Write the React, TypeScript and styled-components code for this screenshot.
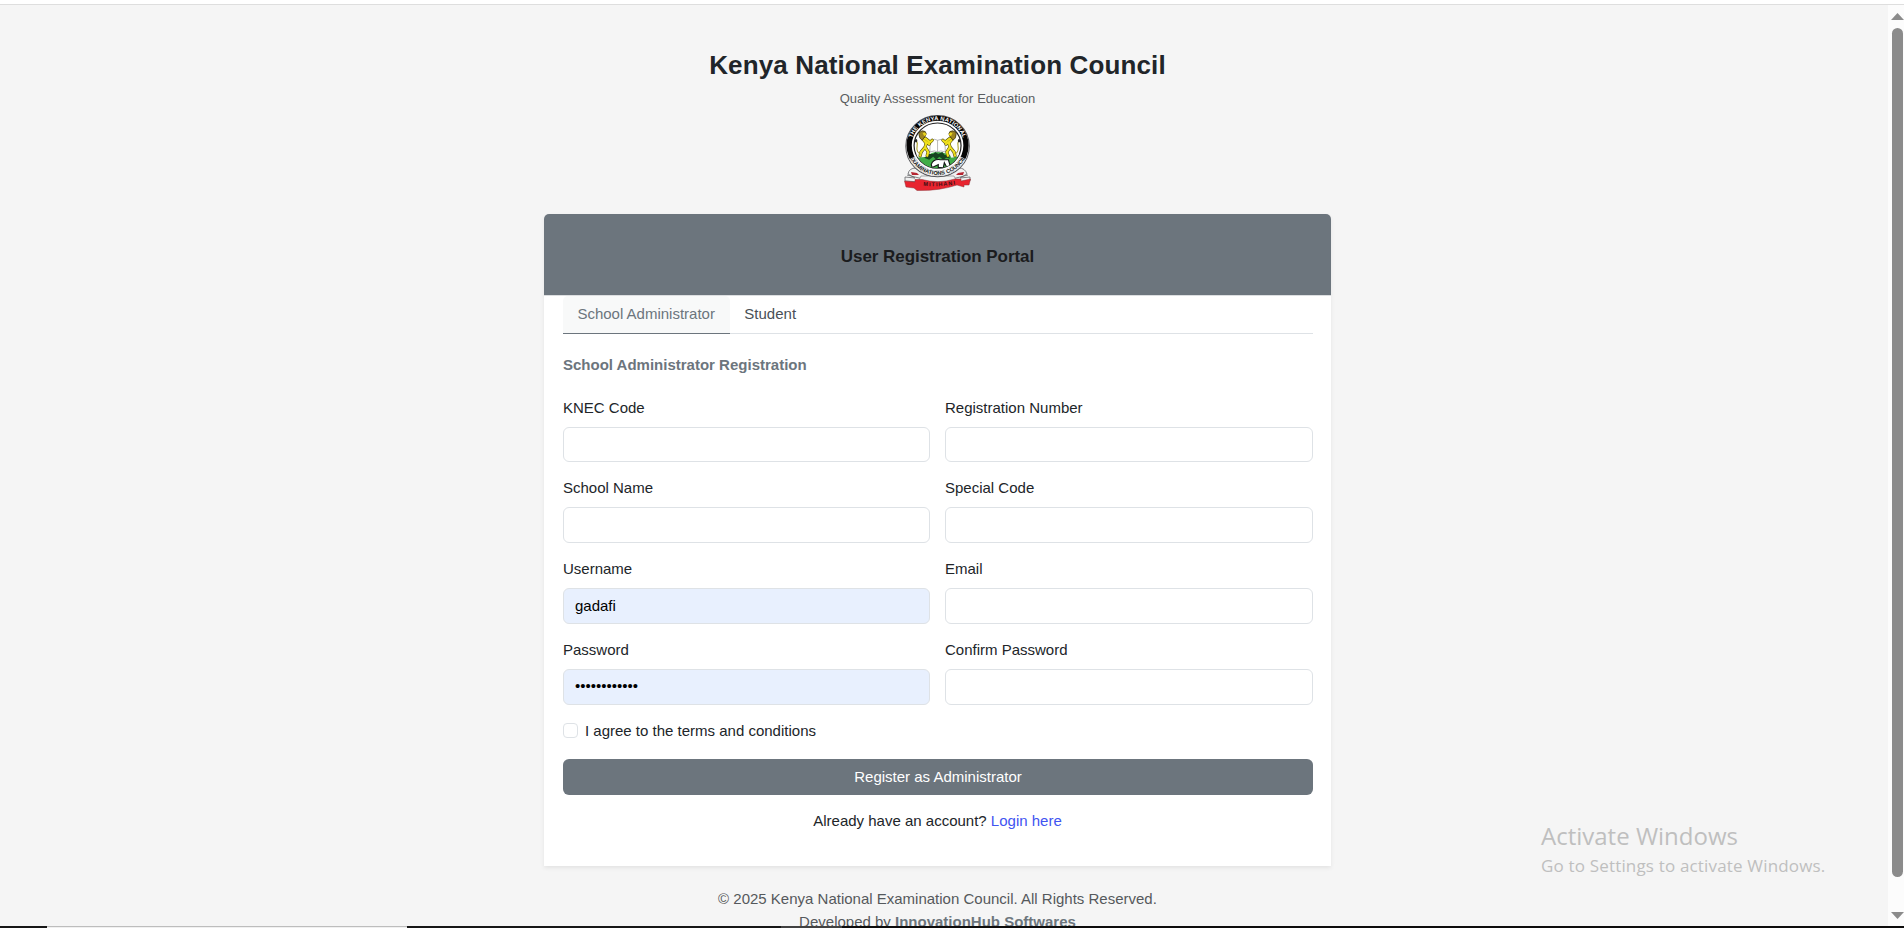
import React, { useState } from 'react';
import styled, { createGlobalStyle } from 'styled-components';

const GlobalStyle = createGlobalStyle`
  *, *::before, *::after { box-sizing: border-box; }
  html, body { margin: 0; padding: 0; }
  body {
    font-family: "Liberation Sans", Arial, sans-serif;
    font-size: 15px;
    line-height: 22px;
    color: #212529;
    background: #f5f5f5;
    overflow: hidden;
  }
`;

const Screen = styled.div`
  position: relative;
  display: flex;
  flex-direction: column;
  width: 100%;
  height: 100vh;
  overflow: hidden;
`;

const TopEdge = styled.div`
  flex: none;
  height: 5px;
  background: #fff;
  border-bottom: 1px solid #dedede;
`;

const Viewport = styled.div`
  flex: 1;
  min-height: 0;
  display: flex;
  overflow: hidden;
`;

const Page = styled.main`
  flex: 1;
  display: flex;
  flex-direction: column;
  align-items: center;
  padding: 42px 13px 0 0;
  background: #f5f5f5;
`;

const Brand = styled.header`
  display: flex;
  flex-direction: column;
  align-items: center;
  height: 167px;
  flex: none;
`;

const BrandTitle = styled.h1`
  margin: 0;
  font-size: 26px;
  line-height: 36px;
  font-weight: 700;
  letter-spacing: 0.13px;
`;

const BrandTagline = styled.p`
  margin: 6px 0;
  font-size: 13px;
  line-height: 20px;
  letter-spacing: 0.04px;
  color: #5a5d60;
`;

const Card = styled.section`
  flex: none;
  width: 787px;
  height: 652px;
  background: #fff;
  border-radius: 5px 5px 0 0;
  box-shadow: 0 2px 4px rgba(0, 0, 0, 0.075);
`;

const CardHeader = styled.div`
  display: flex;
  align-items: center;
  justify-content: center;
  height: 82px;
  padding-top: 5px;
  background: #6c757d;
  border-bottom: 1px solid #dcdee0;
  border-radius: 5px 5px 0 0;
`;

const CardTitle = styled.h2`
  margin: 0;
  font-size: 17px;
  line-height: 22px;
  letter-spacing: -0.05px;
  color: #1b1c1e;
`;

const CardBody = styled.div`
  padding: 0 18px 0 19px;
`;

const Tabs = styled.div`
  display: flex;
  height: 38px;
  border-bottom: 1px solid #dee2e6;
`;

const Tab = styled.button<{ $active: boolean }>`
  height: 38px;
  padding: 0 15px 1px 14.4px;
  border: 0;
  border-bottom: 1px solid ${(p) => (p.$active ? '#6c757d' : 'transparent')};
  border-radius: 5px 5px 0 0;
  background: ${(p) => (p.$active ? '#f8f9f9' : 'transparent')};
  color: ${(p) => (p.$active ? '#6c757d' : '#495057')};
  font: inherit;
`;

const SectionTitle = styled.h3`
  margin: 20px 0 21px;
  font-size: 15px;
  line-height: 22px;
  color: #6c757d;
`;

const Fields = styled.div`
  display: grid;
  grid-template-columns: 367px 368px;
  column-gap: 15px;
  grid-template-rows: 80px repeat(3, 81px);
`;

const Field = styled.label`
  display: flex;
  flex-direction: column;
  gap: 8px;
  padding-bottom: 15px;
`;

const Input = styled.input<{ $filled: boolean }>`
  width: 100%;
  flex: 1;
  min-height: 0;
  padding: 0 11px 1px;
  border: 1px solid #dee2e6;
  border-radius: 6px;
  outline: none;
  background: ${(p) => (p.$filled ? '#e8f0fe' : '#fff')};
  color: #000;
  font: inherit;

  &[type='password'] { padding-bottom: 3px; }
`;

const Agreement = styled.label`
  display: flex;
  align-items: center;
  gap: 7px;
  height: 22px;
  margin-bottom: 17px;
`;

const Checkbox = styled.input`
  appearance: none;
  width: 15px;
  height: 15px;
  margin: 0 0 1px;
  border: 1px solid #dee2e6;
  border-radius: 4px;
  background: #fff;
`;

const SubmitButton = styled.button`
  display: block;
  width: 100%;
  height: 36px;
  border: 0;
  border-radius: 6px;
  background: #6c757d;
  color: #fff;
  font: inherit;
`;

const LoginPrompt = styled.p`
  margin: 15px 1px 0 0;
  text-align: center;
`;

const LoginLink = styled.a`
  color: #4154f1;
  text-decoration: none;
`;

const Footer = styled.footer`
  padding-top: 21px;
  line-height: 23px;
  text-align: center;
  color: #55595c;

  p { margin: 0; }
  strong { color: #6c757d; }
`;

const ScrollTrack = styled.div`
  flex: none;
  display: flex;
  flex-direction: column;
  align-items: center;
  width: 16px;
  padding: 8px 0 7px 3px;
  background: #fcfcfc;
`;

const ScrollThumb = styled.div`
  width: 11px;
  height: 849px;
  margin: 8px 0 auto;
  border-radius: 6px;
  background: #8b8b8b;
`;

const Arrow = styled.svg`
  flex: none;
  display: block;
  width: 13px;
  height: 7px;
  fill: #8b8b8b;
`;

const TaskStrip = styled.div`
  flex: none;
  display: flex;
  height: 2px;
  background: #0d0c0c;
`;

const StripPart = styled.div<{ $width: number; $tone: string; $edge?: string }>`
  width: ${(p) => p.$width}px;
  background: ${(p) => p.$tone};
  border-top: ${(p) => (p.$edge ? `1px solid ${p.$edge}` : '0')};
`;

const Watermark = styled.aside`
  position: absolute;
  left: 1541px;
  top: 820px;
  font-family: "Open Sans", "Noto Sans", sans-serif;
  color: #bfbfbf;
  white-space: nowrap;
`;

const WatermarkTitle = styled.div`
  font-size: 24px;
  line-height: 32px;
`;

const WatermarkText = styled.div`
  font-size: 17px;
  line-height: 27px;
  letter-spacing: 0.17px;
`;

function Lion() {
  return (
    <g fill="none" strokeLinecap="round" strokeLinejoin="round">
      <path d="M18 20 L19 25 L22 29 L21 33 L17 38 L16 42 M21 33 L24 38 L23 42 M21 24 L26 28 L28 26 M21 27 L25 30" stroke="#4a430c" strokeWidth="3.2" />
      <path d="M18 20 L19 25 L22 29 L21 33 L17 38 L16 42 M21 33 L24 38 L23 42 M21 24 L26 28 L28 26 M21 27 L25 30" stroke="#efe01c" strokeWidth="2.2" />
      <path d="M16 40 Q12 38 13 32 Q14 29 12 26" stroke="#a39818" strokeWidth="1" />
      <path d="M15 18 Q18 15 21 17 Q23 19 21 22 L18 26 Q15 24 15 21 Z" fill="#9c8420" stroke="#3c3210" strokeWidth=".8" />
      <path d="M18.5 18.5 L21 18 L22.5 20.5 L20 21.5 Z" fill="#e9d51e" />
      <ellipse cx="12" cy="26.5" rx="1.2" ry="1.8" fill="#222" />
    </g>
  );
}

function Crest() {
  return (
    <svg width="67" height="76" viewBox="0 0 67 76" role="img" aria-label="Kenya National Examinations Council crest">
      <defs>
        <path id="arcTop" d="M7.1 31.5 A26.2 26.2 0 0 1 59.5 31.5" />
        <path id="arcBottom" d="M3.2 31.5 A30.1 30.1 0 0 0 63.4 31.5" />
        <path id="ribbonLine" d="M15 70.4 Q34 72.6 54 69" />
        <clipPath id="shield"><circle cx="33.3" cy="32" r="22.8" /></clipPath>
      </defs>
      <g stroke="#66676b" strokeWidth=".8" fill="#f1f1f1">
        <path d="M4 59 Q5 53 12 53 L24 61 L17 67 L1 66 L1 62 L11 63 Z" />
        <path d="M63 59 Q61 53 55 53 L43 61 L50 67 L66 66 L66 62 L56 63 Z" />
        <path d="M3 60 L19 64 M64 60 L48 64" fill="none" />
      </g>
      <path d="M7 57 L13 58 L15 60 L8 60 Z M60 57 L54 58 L52 60 L59 60 Z" fill="#b52632" />
      <path d="M17 61 L50 61 L53 67 L14 67 Z" fill="#f3f3f3" stroke="#77787b" strokeWidth=".6" />
      <path d="M.5 66 L11 67 L11 64.5 L18 64.5 Q34 69 51 64 L57 64 L57 66 L66.5 64 L65 70 L60 70 L60 72 L53 70 Q35 76 13 75.5 L10 73 L2 72 Z" fill="#e8242f" stroke="#8d3338" strokeWidth=".5" />
      <g transform="scale(1.008 .972)">
        <circle cx="33.3" cy="32.1" r="31.5" fill="#fff" stroke="#55565a" strokeWidth="1" />
        <circle cx="33.3" cy="31.5" r="28.2" fill="none" stroke="#050505" strokeWidth="5.2" />
        <path d="M8 44 A28.2 28.2 0 0 0 58.6 44" fill="none" stroke="#f2f2f2" strokeWidth="5.6" />
        <circle cx="33.3" cy="31.5" r="23.3" fill="#fff" stroke="#232323" strokeWidth="1.2" />
        <g clipPath="url(#shield)">
          <path d="M8 42 Q20 43 25 40 Q33 36 43 40 Q50 43 60 42 L60 60 L8 60 Z" fill="#40ad47" />
          <path d="M11 42 Q17 36 22 39 L29 37 L23 43 L12 44 Z M44 38 Q53 36 57 42 L47 44 Z" fill="#f6f6f6" />
          <path d="M20 44 L24 42 L25 40 L29 40 L31 38 L34 40 L38 38 L40 41 L44 42 L46 45 L42 44 L39 46 L35 43 L32 46 L29 43 L25 46 Z" fill="#174420" />
          <path d="M27 51 Q29 45 36 46 L44 46 L46 53 L42 53 L40 49 L39 54 L34 54 L34 51 L28 54 Z" fill="#fff" stroke="#141414" strokeWidth="1.1" />
        </g>
        <path d="M26 26 Q31 24 33.3 26 Q37 24 40.6 26 L41 38 Q36 36 33.3 38 Q31 36 25.6 38 Z M33.3 26 V38" fill="#fff" stroke="#9a9a9a" strokeWidth=".7" />
        <Lion />
        <g transform="translate(66.6 0) scale(-1 1)"><Lion /></g>
        <text fontFamily="Liberation Sans" fontSize="5.8" fontWeight="700" fill="#fff" textAnchor="middle">
          <textPath href="#arcTop" startOffset="50%" textLength="66">THE KENYA NATIONAL</textPath>
        </text>
        <text fontFamily="Liberation Sans" fontSize="5.6" fontWeight="700" fill="#111" textAnchor="middle">
          <textPath href="#arcBottom" startOffset="50%" textLength="70">EXAMINATIONS COUNCIL</textPath>
        </text>
      </g>
      <text fontFamily="Liberation Sans" fontSize="5.6" fontWeight="700" fill="#3a1014" textAnchor="middle">
        <textPath href="#ribbonLine" startOffset="52%" textLength="32">MITIHANI</textPath>
      </text>
    </svg>
  );
}

const fields = [
  { name: 'knec', label: 'KNEC Code' },
  { name: 'registration', label: 'Registration Number' },
  { name: 'school', label: 'School Name' },
  { name: 'special', label: 'Special Code' },
  { name: 'username', label: 'Username', value: 'gadafi' },
  { name: 'email', label: 'Email' },
  { name: 'password', label: 'Password', type: 'password', value: 'administrate' },
  { name: 'confirm', label: 'Confirm Password', type: 'password' },
];

const tabs = ['School Administrator', 'Student'];

export default function App() {
  const [active, setActive] = useState(tabs[0]);
  return (
    <Screen>
      <GlobalStyle />
      <TopEdge />
      <Viewport>
        <Page>
          <Brand>
            <BrandTitle>Kenya National Examination Council</BrandTitle>
            <BrandTagline>Quality Assessment for Education</BrandTagline>
            <Crest />
          </Brand>
          <Card>
            <CardHeader>
              <CardTitle>User Registration Portal</CardTitle>
            </CardHeader>
            <CardBody>
              <Tabs>
                {tabs.map((t) => (
                  <Tab key={t} $active={t === active} onClick={() => setActive(t)}>{t}</Tab>
                ))}
              </Tabs>
              <SectionTitle>School Administrator Registration</SectionTitle>
              <Fields>
                {fields.map((f) => (
                  <Field key={f.name}>
                    {f.label}
                    <Input name={f.name} type={f.type ?? 'text'} defaultValue={f.value} $filled={!!f.value} />
                  </Field>
                ))}
              </Fields>
              <Agreement>
                <Checkbox type="checkbox" />
                I agree to the terms and conditions
              </Agreement>
              <SubmitButton>Register as Administrator</SubmitButton>
              <LoginPrompt>
                Already have an account? <LoginLink href="#">Login here</LoginLink>
              </LoginPrompt>
            </CardBody>
          </Card>
          <Footer>
            <p>© 2025 Kenya National Examination Council. All Rights Reserved.</p>
            <p>Developed by <strong>InnovationHub Softwares</strong></p>
          </Footer>
        </Page>
        <ScrollTrack>
          <Arrow viewBox="0 0 13 7"><path d="M6.5 0 L13 7 H0 Z" /></Arrow>
          <ScrollThumb />
          <Arrow viewBox="0 0 13 7"><path d="M0 0 H13 L6.5 7 Z" /></Arrow>
        </ScrollTrack>
      </Viewport>
      <TaskStrip>
        <StripPart $width={47} $tone="#171717" />
        <StripPart $width={360} $tone="#f0f0f0" $edge="#bdbdbd" />
        <StripPart $width={374} $tone="#171717" />
        <StripPart $width={61} $tone="#414141" />
      </TaskStrip>
      <Watermark>
        <WatermarkTitle>Activate Windows</WatermarkTitle>
        <WatermarkText>Go to Settings to activate Windows.</WatermarkText>
      </Watermark>
    </Screen>
  );
}
